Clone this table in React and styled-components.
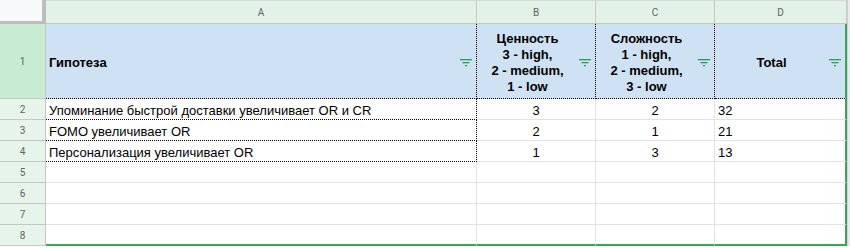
import React from "react";
import styled, { createGlobalStyle, css } from "styled-components";

const Global = createGlobalStyle`
  html, body { margin: 0; padding: 0; background: #fff; }
  body { font-family: "Liberation Sans", Arial, sans-serif; }
`;

const GRID = "#e2e3e3";
const FRAME = "#c4c7c5";
const GREEN = "#34a853";

const Sheet = styled.div`
  display: grid;
  grid-template-columns: 46px 431px 119px 119px 132px 3px;
  grid-template-rows: 24px 75px repeat(7, 21px);
  width: 850px;
  box-sizing: border-box;
`;

const Corner = styled.div`
  box-sizing: border-box;
  background: #f8f9fa;
  border-right: 4px solid #bdbdbd;
  border-bottom: 3px solid #bdbdbd;
`;

const ColHeader = styled.div`
  box-sizing: border-box;
  display: flex;
  align-items: center;
  justify-content: center;
  background: #e3f2e7;
  border-right: 1px solid ${FRAME};
  border-bottom: 1px solid ${FRAME};
  border-top: 1px solid #d5d8d6;
  font-family: Roboto, "Liberation Sans", sans-serif;
  font-size: 10px;
  color: #5f6368;
`;

const Edge = styled.div`
  background: #e8eaed;
  border-left: 1px solid #d0d3d1;
`;

const RowHeader = styled.div`
  box-sizing: border-box;
  display: flex;
  align-items: center;
  justify-content: center;
  padding-top: 1px;
  background: ${(p) => (p.$active ? "#c8ebd3" : "#e6f4ea")};
  border-right: 1px solid ${FRAME};
  border-bottom: 1px solid ${FRAME};
  font-family: Roboto, "Liberation Sans", sans-serif;
  font-size: 10px;
  color: #5f6368;
`;

const edgeBorders = css`
  border-right: ${(p) =>
    p.$greenRight
      ? `2px solid ${GREEN}`
      : p.$dotRight
      ? "1px dotted #000"
      : `1px solid ${GRID}`};
  border-bottom: ${(p) =>
    p.$greenBottom
      ? `2px solid ${GREEN}`
      : p.$dotBottom
      ? "1px dotted #000"
      : `1px solid ${GRID}`};
`;

const HeadCell = styled.div`
  box-sizing: border-box;
  display: flex;
  align-items: center;
  background: #cfe2f3;
  ${edgeBorders}
  padding: 4px 0 0 3px;
`;

const HeadText = styled.div`
  flex: 1;
  font-size: 13px;
  font-weight: bold;
  line-height: 16px;
  color: #000;
  text-align: ${(p) => p.$align || "center"};
  white-space: pre-line;
`;

const FilterSlot = styled.div`
  width: 20px;
  flex: none;
  display: flex;
  align-items: center;
  justify-content: center;
`;

const Cell = styled.div`
  box-sizing: border-box;
  display: flex;
  align-items: center;
  justify-content: ${(p) =>
    p.$align === "center" ? "center" : "flex-start"};
  padding: 3px 3px 0;
  ${edgeBorders}
  font-size: 13px;
  color: #000;
  white-space: nowrap;
  overflow: hidden;
`;

const FilterIcon = () => (
  <svg width="12" height="8" viewBox="0 0 12 8">
    <rect x="0" y="0" width="12" height="1.3" fill="#2a9d52" />
    <rect x="2.5" y="3" width="7" height="1.3" fill="#2a9d52" />
    <rect x="5" y="6" width="2" height="1.3" fill="#2a9d52" />
  </svg>
);

const headers = [
  { text: "Гипотеза", align: "left" },
  { text: "Ценность\n3 - high,\n2 - medium,\n1 - low" },
  { text: "Сложность\n1 - high,\n2 - medium,\n3 - low" },
  { text: "Total" },
];

const rows = [
  ["Упоминание быстрой доставки увеличивает OR и CR", "3", "2", "32"],
  ["FOMO увеличивает OR", "2", "1", "21"],
  ["Персонализация увеличивает OR", "1", "3", "13"],
  ["", "", "", ""],
  ["", "", "", ""],
  ["", "", "", ""],
  ["", "", "", ""],
];

export default function App() {
  return (
    <>
      <Global />
      <Sheet>
        <Corner />
        {["A", "B", "C", "D"].map((l) => (
          <ColHeader key={l}>{l}</ColHeader>
        ))}
        <Edge />

        <RowHeader $active>1</RowHeader>
        {headers.map((h, i) => (
          <HeadCell
            key={i}
            $dotRight={i < 3}
            $greenRight={i === 3}
            $dotBottom
          >
            <HeadText $align={h.align}>{h.text}</HeadText>
            <FilterSlot>
              <FilterIcon />
            </FilterSlot>
          </HeadCell>
        ))}
        <Edge />

        {rows.map((r, ri) => {
          const filled = ri < 3;
          const last = ri === rows.length - 1;
          return (
            <React.Fragment key={ri}>
              <RowHeader>{ri + 2}</RowHeader>
              {r.map((v, ci) => (
                <Cell
                  key={ci}
                  $align={ci === 1 || ci === 2 ? "center" : "left"}
                  $dotRight={ci === 0 && filled}
                  $dotBottom={ci === 0 && filled}
                  $greenRight={ci === 3}
                  $greenBottom={last}
                >
                  {v}
                </Cell>
              ))}
              <Edge />
            </React.Fragment>
          );
        })}
      </Sheet>
    </>
  );
}
